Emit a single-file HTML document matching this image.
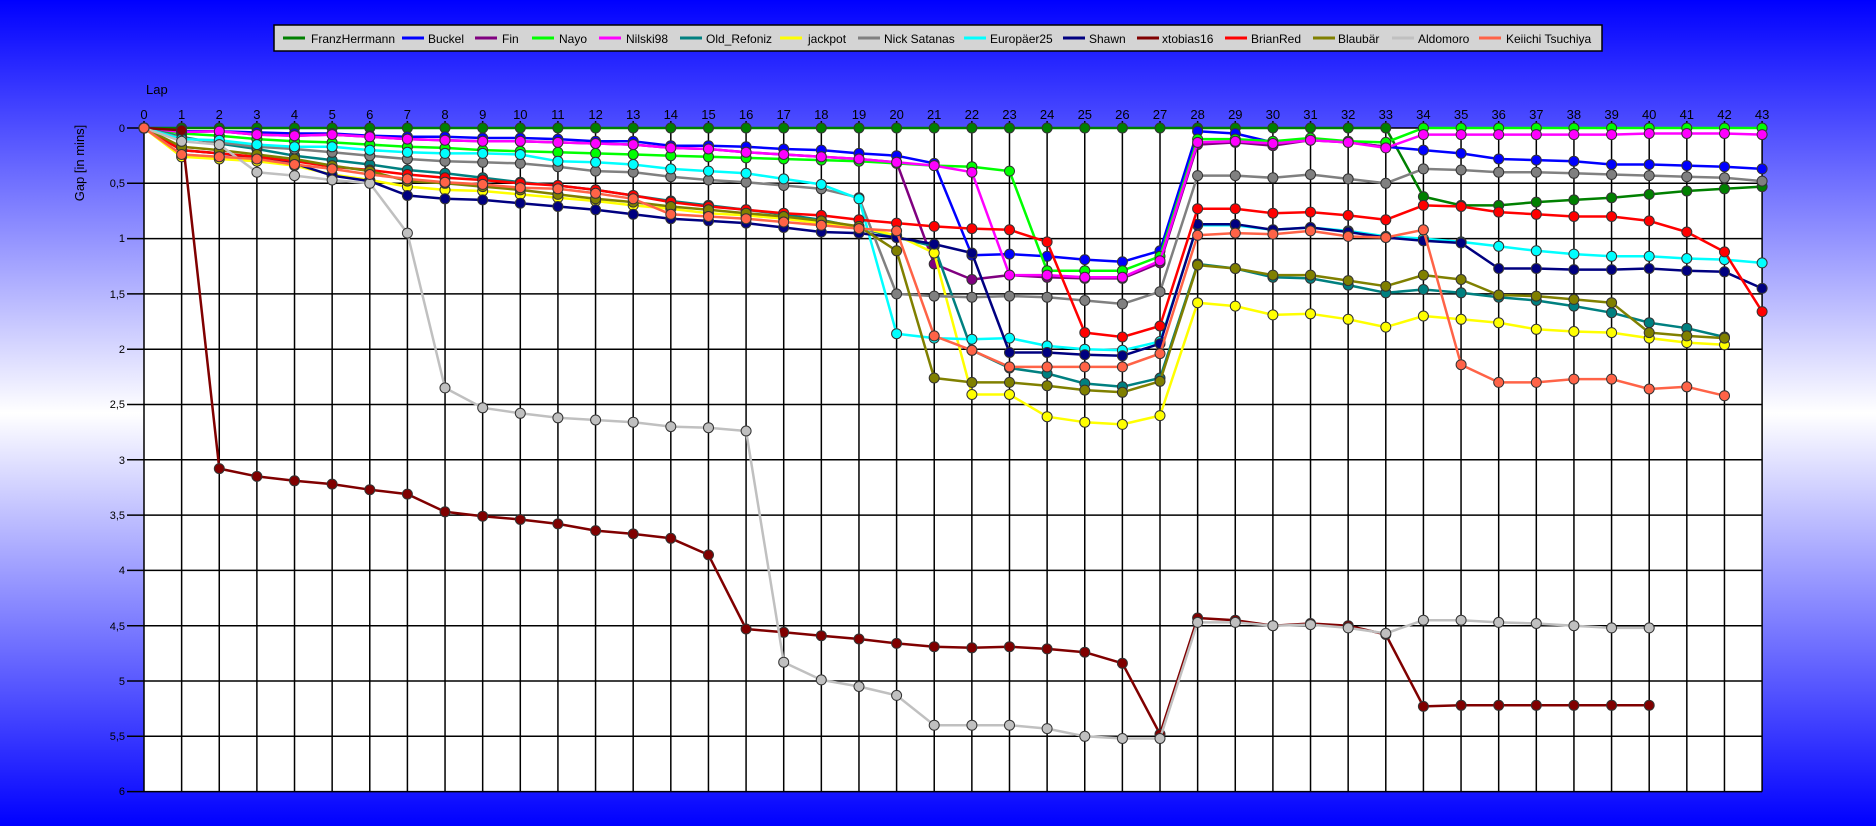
<!DOCTYPE html>
<html><head><meta charset="utf-8">
<style>
html,body{margin:0;padding:0;}
body{width:1876px;height:826px;overflow:hidden;background:linear-gradient(#0000ff 0%,#ffffff 50%,#0000ff 100%);font-family:"Liberation Sans",sans-serif;}
svg{position:absolute;left:0;top:0;}
</style></head><body>
<svg id="c" width="1876" height="826" xmlns="http://www.w3.org/2000/svg" font-family="Liberation Sans, sans-serif">
<rect x="144" y="128" width="1618" height="663.6" fill="#fff"/>
<g id="grid" stroke="#000" stroke-width="1.5"></g>
<g font-size="13" fill="#000" text-anchor="middle" id="lapl">
<text x="144" y="119">0</text><text x="181.6" y="119">1</text><text x="219.3" y="119">2</text><text x="256.9" y="119">3</text><text x="294.5" y="119">4</text><text x="332.2" y="119">5</text><text x="369.8" y="119">6</text><text x="407.4" y="119">7</text><text x="445" y="119">8</text><text x="482.7" y="119">9</text><text x="520.3" y="119">10</text><text x="557.9" y="119">11</text><text x="595.6" y="119">12</text><text x="633.2" y="119">13</text><text x="670.8" y="119">14</text><text x="708.5" y="119">15</text><text x="746.1" y="119">16</text><text x="783.7" y="119">17</text><text x="821.3" y="119">18</text><text x="859" y="119">19</text><text x="896.6" y="119">20</text><text x="934.2" y="119">21</text><text x="971.9" y="119">22</text><text x="1009.5" y="119">23</text><text x="1047.1" y="119">24</text><text x="1084.8" y="119">25</text><text x="1122.4" y="119">26</text><text x="1160" y="119">27</text><text x="1197.6" y="119">28</text><text x="1235.3" y="119">29</text><text x="1272.9" y="119">30</text><text x="1310.5" y="119">31</text><text x="1348.2" y="119">32</text><text x="1385.8" y="119">33</text><text x="1423.4" y="119">34</text><text x="1461.1" y="119">35</text><text x="1498.7" y="119">36</text><text x="1536.3" y="119">37</text><text x="1573.9" y="119">38</text><text x="1611.6" y="119">39</text><text x="1649.2" y="119">40</text><text x="1686.8" y="119">41</text><text x="1724.5" y="119">42</text><text x="1762.1" y="119">43</text>
</g>
<g font-size="11" fill="#000" text-anchor="end">
<text x="125" y="132">0</text><text x="125" y="187">0,5</text><text x="125" y="242">1</text><text x="125" y="298">1,5</text><text x="125" y="353">2</text><text x="125" y="408">2,5</text><text x="125" y="464">3</text><text x="125" y="519">3,5</text><text x="125" y="574">4</text><text x="125" y="630">4,5</text><text x="125" y="685">5</text><text x="125" y="740">5,5</text><text x="125" y="795">6</text>
</g>
<text x="146" y="94" font-size="13">Lap</text>
<text transform="translate(84,163) rotate(-90)" font-size="13" text-anchor="middle">Gap [in mins]</text>
<g id="series"></g>
<rect x="274" y="25" width="1328" height="26" fill="#d4d4d4" stroke="#000" stroke-width="1.5"/>
<g font-size="12" fill="#000" stroke-width="3">
<line x1="283" y1="38" x2="305" y2="38" stroke="#008000"/><text x="311" y="43">FranzHerrmann</text>
<line x1="402" y1="38" x2="424" y2="38" stroke="#0000ff"/><text x="428" y="43">Buckel</text>
<line x1="475" y1="38" x2="497" y2="38" stroke="#800080"/><text x="502" y="43">Fin</text>
<line x1="532" y1="38" x2="554" y2="38" stroke="#00ff00"/><text x="559" y="43">Nayo</text>
<line x1="599" y1="38" x2="621" y2="38" stroke="#ff00ff"/><text x="626" y="43">Nilski98</text>
<line x1="680" y1="38" x2="702" y2="38" stroke="#008080"/><text x="706" y="43">Old_Refoniz</text>
<line x1="780" y1="38" x2="802" y2="38" stroke="#ffff00"/><text x="808" y="43">jackpot</text>
<line x1="858" y1="38" x2="880" y2="38" stroke="#808080"/><text x="884" y="43">Nick Satanas</text>
<line x1="964" y1="38" x2="986" y2="38" stroke="#00ffff"/><text x="990" y="43">Europäer25</text>
<line x1="1063" y1="38" x2="1085" y2="38" stroke="#000080"/><text x="1089" y="43">Shawn</text>
<line x1="1137" y1="38" x2="1159" y2="38" stroke="#800000"/><text x="1162" y="43">xtobias16</text>
<line x1="1225" y1="38" x2="1247" y2="38" stroke="#ff0000"/><text x="1251" y="43">BrianRed</text>
<line x1="1313" y1="38" x2="1335" y2="38" stroke="#808000"/><text x="1338" y="43">Blaubär</text>
<line x1="1392" y1="38" x2="1414" y2="38" stroke="#c0c0c0"/><text x="1418" y="43">Aldomoro</text>
<line x1="1479" y1="38" x2="1501" y2="38" stroke="#ff6347"/><text x="1506" y="43">Keiichi Tsuchiya</text>
</g>
</svg>
<script>
(function(){
function X(i){return 144+37.63*i;}
function Y(v){return 128+110.6*v;}
var g=document.getElementById("grid"),s="";
for(var i=0;i<=43;i++){s+='<line x1="'+X(i)+'" y1="121" x2="'+X(i)+'" y2="791.6"/>';}
for(var k=0;k<=12;k++){var y=Y(k*0.5);s+='<line x1="127" y1="'+y+'" x2="1762.1" y2="'+y+'"/>';}
g.innerHTML=s;
var Z=[];for(var i=0;i<34;i++)Z.push(0);
var mag=[0,.036,.03,.06,.07,.06,.08,.10,.11,.12,.12,.13,.14,.15,.18,.19,.22,.24,.26,.28,.31,.34,.40,1.33,1.33,1.35,1.35,1.20,.13,.12,.14,.11,.13,.18,.06,.06,.06,.06,.06,.06,.05,.05,.05,.06];
var D=[
["#008000",Z.concat([.62,.70,.70,.67,.65,.63,.60,.57,.55,.53])],
["#0000ff",[0,.03,.03,.04,.05,.05,.07,.08,.08,.09,.09,.10,.12,.12,.16,.16,.17,.19,.2,.23,.25,.32,1.15,1.14,1.16,1.19,1.21,1.11,.03,.05,.13,.10,.13,.17,.20,.23,.28,.29,.30,.33,.33,.34,.35,.37]],
["#800080",mag.slice(0,21).concat([1.23,1.37,1.33,1.35,1.36,1.36,1.22,.15,.13,.16,.11,.13,.17])],
["#00ff00",[0,.05,.07,.1,.12,.13,.15,.17,.18,.2,.21,.22,.23,.24,.25,.26,.27,.28,.29,.30,.32,.34,.35,.39,1.29,1.29,1.29,1.16,.1,.1,.12,.09,.12,.13,0,0,0,0,0,0,0,0,0,0]],
["#ff00ff",mag],
["#008080",[0,.08,.14,.19,.25,.29,.33,.38,.41,.45,.49,.52,.56,.61,.66,.70,.74,.78,.83,.90,.99,1.07,2.01,2.17,2.22,2.31,2.34,2.26,1.23,1.27,1.35,1.36,1.42,1.49,1.46,1.49,1.53,1.56,1.61,1.67,1.76,1.81,1.89]],
["#ffff00",[0,.26,.28,.30,.34,.42,.47,.53,.56,.57,.60,.63,.66,.70,.73,.77,.79,.82,.86,.90,.97,1.13,2.41,2.41,2.61,2.66,2.68,2.60,1.58,1.61,1.69,1.68,1.73,1.80,1.70,1.73,1.76,1.82,1.84,1.85,1.90,1.94,1.96]],
["#808080",[0,.09,.13,.17,.19,.22,.25,.28,.30,.31,.32,.35,.39,.40,.44,.47,.49,.52,.55,.63,1.50,1.52,1.53,1.52,1.53,1.56,1.59,1.48,.43,.43,.45,.42,.46,.50,.37,.38,.40,.40,.41,.42,.43,.44,.45,.48]],
["#00ffff",[0,.1,.11,.15,.17,.17,.20,.22,.23,.23,.24,.30,.31,.33,.37,.39,.41,.46,.51,.64,1.86,1.90,1.91,1.90,1.97,2.00,2.01,1.93,.88,.88,.92,.90,.93,.98,1.0,1.03,1.07,1.11,1.14,1.16,1.16,1.18,1.19,1.22]],
["#000080",[0,.2,.23,.27,.32,.43,.48,.61,.64,.65,.68,.71,.74,.78,.82,.84,.86,.90,.94,.95,.99,1.05,1.13,2.03,2.03,2.05,2.06,1.95,.87,.87,.92,.90,.94,.99,1.02,1.04,1.27,1.27,1.28,1.28,1.27,1.29,1.30,1.45]],
["#800000",[0,.02,3.08,3.15,3.19,3.22,3.27,3.31,3.47,3.51,3.54,3.58,3.64,3.67,3.71,3.86,4.53,4.56,4.59,4.62,4.66,4.69,4.70,4.69,4.71,4.74,4.84,5.48,4.43,4.45,4.50,4.48,4.50,4.58,5.23,5.22,5.22,5.22,5.22,5.22,5.22]],
["#ff0000",[0,.2,.23,.26,.30,.35,.38,.42,.45,.47,.50,.52,.56,.61,.67,.71,.74,.77,.79,.83,.86,.89,.91,.92,1.03,1.85,1.89,1.79,.73,.73,.77,.76,.79,.83,.70,.71,.76,.78,.80,.80,.84,.94,1.12,1.66]],
["#808000",[0,.17,.2,.24,.28,.34,.39,.48,.5,.53,.56,.60,.64,.67,.71,.74,.77,.80,.84,.89,1.11,2.26,2.30,2.30,2.33,2.37,2.39,2.29,1.24,1.27,1.33,1.33,1.38,1.43,1.33,1.37,1.51,1.52,1.55,1.58,1.85,1.88,1.90]],
["#c0c0c0",[0,.12,.15,.40,.43,.47,.50,.95,2.35,2.53,2.58,2.62,2.64,2.66,2.70,2.71,2.74,4.83,4.99,5.05,5.13,5.40,5.40,5.40,5.43,5.50,5.52,5.52,4.47,4.47,4.50,4.49,4.52,4.57,4.45,4.45,4.47,4.48,4.50,4.52,4.52]],
["#ff6347",[0,.24,.26,.28,.33,.37,.42,.46,.49,.51,.54,.55,.59,.64,.78,.80,.82,.85,.88,.91,.93,1.88,2.01,2.16,2.16,2.16,2.16,2.04,.97,.95,.96,.93,.98,.99,.92,2.14,2.30,2.30,2.27,2.27,2.36,2.34,2.42]]
];
var out="";
D.forEach(function(d){
 var c=d[0],v=d[1],p=[];
 for(var i=0;i<v.length;i++)p.push(X(i).toFixed(1)+","+Y(v[i]).toFixed(1));
 out+='<polyline points="'+p.join(" ")+'" fill="none" stroke="'+c+'" stroke-width="2.5" stroke-linejoin="round"/>';
 for(var i=0;i<v.length;i++)out+='<circle cx="'+X(i).toFixed(1)+'" cy="'+Y(v[i]).toFixed(1)+'" r="5" fill="'+c+'" stroke="#333" stroke-width="1"/>';
});
document.getElementById("series").innerHTML=out;
})();
</script>
</body></html>
